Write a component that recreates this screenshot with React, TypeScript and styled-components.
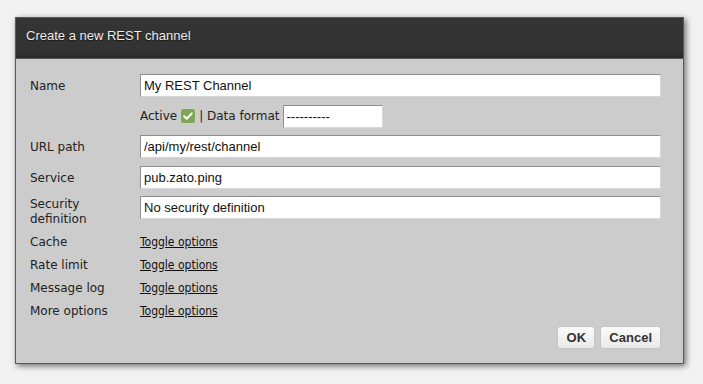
import React, { useState } from "react";
import styled, { createGlobalStyle } from "styled-components";

const GlobalStyle = createGlobalStyle`
  html, body {
    margin: 0;
    padding: 0;
    background: #f2f2f2;
  }
`;

const Page = styled.div`
  padding: 17px 0 0 15px;
  height: 384px;
  box-sizing: border-box;
`;

const Dialog = styled.div`
  width: 669px;
  box-sizing: border-box;
  border: 1px solid #5a5a5a;
  background: #cccccc;
  box-shadow: 2px 2px 6px rgba(0, 0, 0, 0.55);
`;

const TitleBar = styled.div`
  height: 41px;
  box-sizing: border-box;
  padding: 10px 10px 0 10px;
  background: linear-gradient(to bottom, #343434 0%, #333333 80%, #2a2a2a 100%);
  border-bottom: 1px solid #555;
  color: #ececec;
  font: 13px/16px "Liberation Sans", Arial, sans-serif;
  text-shadow: 0 1px 1px rgba(0, 0, 0, 0.6);
`;

const Body = styled.div`
  padding: 15px 22px 14px 14px;
  display: flex;
  flex-direction: column;
  gap: 7.5px;
`;

const Row = styled.div`
  display: grid;
  grid-template-columns: 110px 1fr;
  align-items: start;
`;

// labels sit 1px lower than the centre of the input; the negative margin keeps row height
const Label = styled.div<{ $multi?: boolean }>`
  font: 12px "DejaVu Sans", sans-serif;
  line-height: ${(p) => (p.$multi ? "15px" : "23px")};
  padding-top: 1px;
  margin-bottom: -1px;
  color: #222;
`;

const ToggleLabel = styled(Label)`
  line-height: 15.5px;
`;

const TextInput = styled.input<{ $width?: number }>`
  box-sizing: border-box;
  height: 23px;
  width: ${(p) => (p.$width ? `${p.$width}px` : "100%")};
  padding: 0 3px;
  border: 1px solid;
  border-color: #8e8e8e #d8d8d8 #d8d8d8 #8e8e8e;
  background: #fff;
  font: 13px "Liberation Sans", Arial, sans-serif;
  color: #111;
  outline: none;
`;

const DataFormatInput = styled(TextInput)`
  margin-left: -1px;
`;

const InlineLine = styled.div`
  display: flex;
  align-items: center;
  gap: 4px;
  font: 12px "DejaVu Sans", sans-serif;
  color: #222;
  height: 23px;
`;

const Check = styled.span`
  display: inline-flex;
  width: 14px;
  height: 14px;
`;

const ToggleLink = styled.a`
  font: 12px "DejaVu Sans Condensed", "DejaVu Sans", sans-serif;
  font-stretch: condensed;
  line-height: 15.5px;
  padding-top: 1px;
  margin-bottom: -1px;
  color: #111;
  text-decoration: underline;
  cursor: pointer;
`;

const Buttons = styled.div`
  display: flex;
  justify-content: flex-end;
  gap: 5px;
  margin-top: 0.5px;
`;

const Button = styled.button`
  height: 23px;
  min-width: 38px;
  box-sizing: border-box;
  padding: 0 8px;
  border: 1px solid #c4c4c4;
  border-radius: 3px;
  background: linear-gradient(to bottom, #fbfbfb, #e9e9e9);
  font: bold 13px "Liberation Sans", Arial, sans-serif;
  color: #333;
  text-align: center;
  cursor: pointer;
`;

const CheckIcon = () => (
  <svg width="14" height="14" viewBox="0 0 14 14">
    <rect x="0" y="0" width="14" height="14" rx="2.5" fill="#7fa655" />
    <path d="M3.2 7.3 L5.8 9.8 L10.8 4.4" stroke="#fff" strokeWidth="2" fill="none" strokeLinecap="round" strokeLinejoin="round" />
  </svg>
);

const toggles = ["Cache", "Rate limit", "Message log", "More options"];

const App = () => {
  const [name, setName] = useState("My REST Channel");
  const [urlPath, setUrlPath] = useState("/api/my/rest/channel");
  const [service, setService] = useState("pub.zato.ping");

  return (
    <Page>
      <GlobalStyle />
      <Dialog>
        <TitleBar>Create a new REST channel</TitleBar>
        <Body>
          <Row>
            <Label>Name</Label>
            <TextInput value={name} onChange={(e) => setName(e.target.value)} />
          </Row>
          <Row>
            <span />
            <InlineLine>
              Active
              <Check>
                <CheckIcon />
              </Check>
              | Data format
              <DataFormatInput $width={100} defaultValue="----------" />
            </InlineLine>
          </Row>
          <Row>
            <Label>URL path</Label>
            <TextInput value={urlPath} onChange={(e) => setUrlPath(e.target.value)} />
          </Row>
          <Row>
            <Label>Service</Label>
            <TextInput value={service} onChange={(e) => setService(e.target.value)} />
          </Row>
          <Row>
            <Label $multi>
              Security
              <br />
              definition
            </Label>
            <TextInput defaultValue="No security definition" />
          </Row>
          {toggles.map((t) => (
            <Row key={t}>
              <ToggleLabel>{t}</ToggleLabel>
              <ToggleLink>Toggle options</ToggleLink>
            </Row>
          ))}
          <Buttons>
            <Button>OK</Button>
            <Button>Cancel</Button>
          </Buttons>
        </Body>
      </Dialog>
    </Page>
  );
};

export default App;
